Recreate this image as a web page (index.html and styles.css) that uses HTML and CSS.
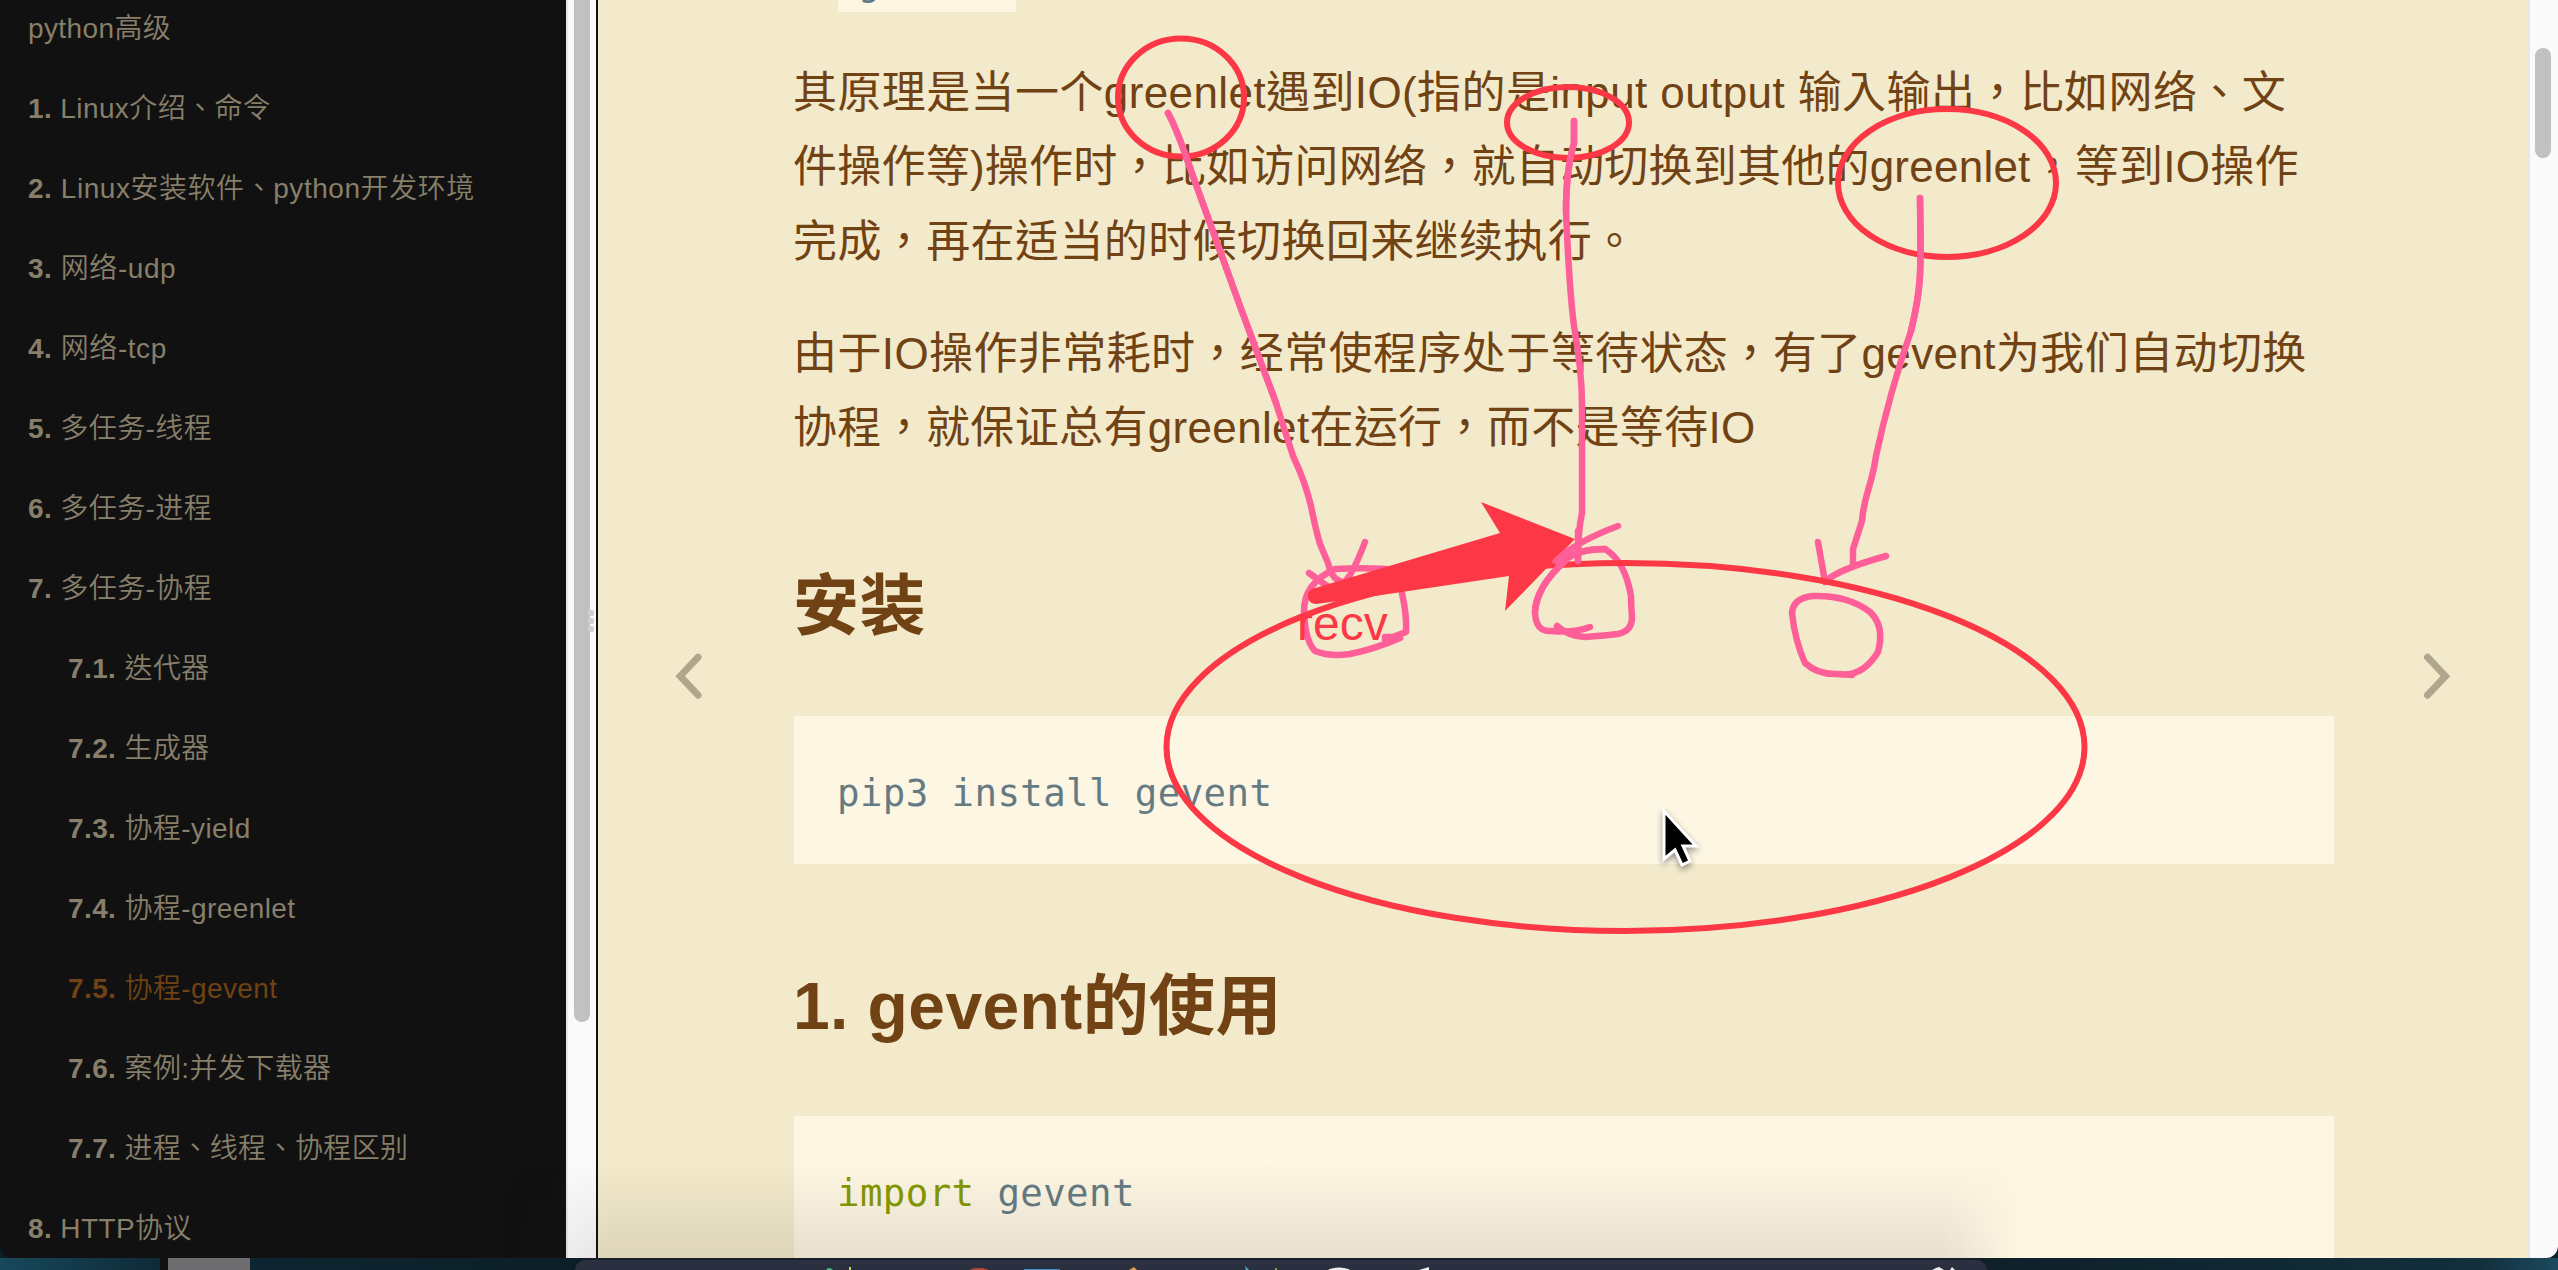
FILE: index.html
```html
<!DOCTYPE html>
<html lang="zh-TW">
<head>
<meta charset="utf-8">
<title>协程-gevent</title>
<link rel="stylesheet" href="styles.css">
</head>
<body>
<div class="window">
  <nav class="sidebar">
    <ul class="summary">
      <li>python高级</li>
      <li><b>1.</b> Linux介绍、命令</li>
      <li class="wide"><b>2.</b> Linux安装软件、python开发环境</li>
      <li class="wide"><b>3.</b> 网络-udp</li>
      <li class="wide"><b>4.</b> 网络-tcp</li>
      <li><b>5.</b> 多任务-线程</li>
      <li><b>6.</b> 多任务-进程</li>
      <li><b>7.</b> 多任务-协程</li>
      <li class="sub"><b>7.1.</b> 迭代器</li>
      <li class="sub"><b>7.2.</b> 生成器</li>
      <li class="sub"><b>7.3.</b> 协程-yield</li>
      <li class="sub"><b>7.4.</b> 协程-greenlet</li>
      <li class="sub active"><b>7.5.</b> 协程-gevent</li>
      <li class="sub"><b>7.6.</b> 案例:并发下载器</li>
      <li class="sub"><b>7.7.</b> 进程、线程、协程区别</li>
      <li><b>8.</b> HTTP协议</li>
    </ul>
  </nav>
  <div class="track side-track"><div class="thumb side-thumb"></div><div class="grip"><i></i><i></i><i></i></div></div>
  <main class="book">
    <svg class="nav" viewBox="0 0 28 46"><path d="M24.100 4.200L6.200 23.200L24.100 42.200"/></svg>
    <article class="page">
      <pre class="snippet">gevent</pre>
      <p>其原理是当一个greenlet遇到IO(指的是input output 输入输出，比如网络、文<br><span class="tight">件操作等)操作时，比如访问网络，就自动切换到其他的greenlet，等到IO操作</span><br>完成，再在适当的时候切换回来继续执行。</p>
      <p class="final">由于IO操作非常耗时，经常使程序处于等待状态，有了gevent为我们自动切换<br><span class="snug">协程，就保证总有greenlet在运行，而不是等待IO</span></p>
      <h2>安装</h2>
      <pre class="code">pip3 install gevent</pre>
      <h2 class="second">1. gevent的使用</h2>
      <pre class="code last"><span class="kw">import</span> gevent</pre>
    </article>
    <svg class="nav" viewBox="0 0 28 46"><path d="M5.500 4.200L23.400 23.200L5.500 42.200"/></svg>
  </main>
  <div class="track page-track"><div class="thumb page-thumb"></div></div>
</div>
<div class="desktop">
  <div class="device"></div>
  <div class="dock">
    <svg width="1412" height="10" viewBox="572 1260 1412 10">
      <path d="M823 1270q3-4 7 0z" fill="#4fb98a"/>
      <path d="M847 1267v3" stroke="#c8cf6a" stroke-width="2"/>
      <ellipse cx="976" cy="1273" rx="12" ry="5" fill="#b9463f"/>
      <path d="M1021 1269h36v1h-36z" fill="#3f8fd0"/>
      <path d="M1126 1270l5-3 3 3z" fill="#e09a50"/>
      <path d="M1242 1266l4 4h-3z" fill="#5bb6cf"/>
      <path d="M1273 1268v2" stroke="#8a9a4a" stroke-width="2"/>
      <ellipse cx="1336" cy="1273" rx="13" ry="5.500" fill="#eee"/>
      <path d="M1416 1270l10-3v3z" fill="#eee"/>
      <path d="M1929 1270l4-2 3-1 5 3zM1947 1270l2-3 3 3z" fill="#eee"/>
    </svg>
  </div>
</div>
<div class="dock-shade"></div>
<svg class="ink" viewBox="0 0 2558 1270">
  <g class="pink" transform="translate(0 1)">
    <path d="M1168 112C1178 130 1184 150 1194 178L1240 305L1276 402L1293 455Q1305 480 1311 505Q1316 530 1320 543L1328 562Q1332 578 1340 580"/>
    <path d="M1309 572L1327 585Q1340 590 1350 574Q1358 560 1365 541"/>
    <path d="M1400 569Q1370 566 1335 568Q1304 582 1304 610Q1305 640 1315 650Q1330 656 1350 653Q1375 648 1400 637M1402 592Q1407 615 1406 631L1385 639M1385 636L1400 636"/>
    <path d="M1574 120V142Q1566 170 1566 210Q1569 285 1574 325Q1582 370 1582 405V512Q1578 530 1578 560"/>
    <path d="M1565 560Q1537 585 1535 610Q1535 631 1551 630Q1575 632 1590 626M1557 625Q1568 635 1585 636Q1610 634 1618 633Q1632 630 1632 616Q1631 605 1631 595Q1625 560 1605 548Q1578 548 1564 560"/>
    <path d="M1920 197C1921 270 1922 285 1911 330Q1890 390 1876 455C1872 485 1864 493 1862 520L1853 548V562"/>
    <path d="M1818 541L1825 581Q1836 569 1886 555"/>
    <path d="M1813 595Q1793 597 1792 612Q1795 640 1805 662Q1818 674 1838 673Q1862 677 1878 651Q1885 625 1870 611Q1848 594 1813 595M1838 673L1852 674"/>
  </g>
  <g class="red">
    <ellipse cx="1181" cy="97.500" rx="63" ry="59"/>
    <ellipse cx="1568" cy="122.500" rx="61" ry="35.500"/>
    <ellipse cx="1947" cy="183" rx="109" ry="74"/>
    <ellipse cx="1625.500" cy="747" rx="459" ry="184"/>
  </g>
  <path class="pink" transform="translate(0 1)" d="M1168 112C1178 130 1184 150 1194 178L1240 305L1276 402M1574 120V142Q1566 170 1566 210M1920 197C1921 270 1922 285 1911 330"/>
  <path class="arrow" d="M1312 589L1500 533L1481 502L1575 539L1505 611L1509 576L1375 596L1316 604A8 8 0 0 1 1312 589Z"/>
  <path class="pink" transform="translate(0 1)" d="M1618 525Q1575 541 1556 560M1578 530V560M1565 560Q1537 585 1535 610M1564 560Q1578 548 1605 548"/>
  <path class="cursor" d="M1664 811V859L1675 850L1682 865L1690 861L1683 846H1696Z"/>
</svg>
<div class="note">recv</div>
</body>
</html>
```
FILE: styles.css
```css
* { box-sizing: border-box; }
body {
  margin: 0;
  width: 2558px;
  height: 1270px;
  overflow: hidden;
  position: relative;
  background: #0d2029;
  font-family: "Liberation Sans", "Noto Sans CJK TC", "Noto Sans CJK SC", sans-serif;
}
.window {
  display: flex;
  height: 1258px;
  border-radius: 0 0 12px 12px;
  overflow: hidden;
  background: #111;
}
.sidebar { width: 566px; flex: none; background: #111; overflow: hidden; }
.summary { list-style: none; margin: 0; padding: 0; margin-top: -11px; }
.summary li {
  height: 80px;
  padding-left: 28px;
  font: 350 28px/80px "Liberation Sans", "Noto Sans CJK TC", sans-serif;
  letter-spacing: .4px;
  color: #877f6a;
  white-space: nowrap;
}
.summary b { font-weight: 700; }
.summary li.wide { letter-spacing: .55px; }
.summary li.sub { padding-left: 68px; }
.summary li.active { color: #704214; }
.track { background: #fafafa; flex: none; position: relative; }
.side-track { width: 30px; border-left: 2px solid #e8e8e8; }
.thumb { background: #c1c1c1; border-radius: 8px; width: 16px; margin-left: 6px; }
.side-thumb { height: 1022px; border-radius: 0 0 8px 8px; }
.grip { position: absolute; left: 20px; top: 610px; display: grid; gap: 2px; }
.grip i { width: 6px; height: 6px; border-radius: 2px; background: #d0d0d0; }
.book {
  flex: 1;
  margin-left: 2px;
  background: #f3eacb;
  display: flex;
  align-items: flex-start;
  overflow: hidden;
}
.nav { width: 28px; height: 46px; flex: none; margin: 653px 0 0 76px; fill: none; stroke: #b0a68e; stroke-width: 7; stroke-linecap: round; }
.page { width: 1540px; flex: none; margin-left: 92px; color: #704214; }
.page + .nav { margin-left: 88px; }
.snippet, .code {
  margin: 0;
  background: #fdf6e3;
  color: #657b83;
  font-family: "DejaVu Sans Mono", monospace;
  font-size: 37.400px;
  letter-spacing: .4px;
}
.snippet { width: 178px; margin: -18px 0 0 44px; height: 30px; line-height: 0; padding: 0 20px; }
.page p {
  margin: 0 0 37.400px -1px;
  font-size: 44px;
  line-height: 74.400px;
  letter-spacing: .4px;
  white-space: nowrap;
}
.snippet + p { margin-top: 44px; }
.page p.final { margin-bottom: 0; }
.tight { letter-spacing: .24px; }
.snug { letter-spacing: .34px; }
.page h2 {
  margin: 0 0 0 -1px;
  font-size: 66px;
  line-height: 80px;
  letter-spacing: .4px;
  padding: 101px 0 70px;
}
.code { height: 148px; padding: 44px 43px; line-height: 66px; }
.page h2.second { padding: 102px 0 70px; }
.kw { color: #859900; }
.page-track { width: 30px; border-left: 2px solid #e8e8e8; }
.page-thumb { margin: 48px 0 0 5px; height: 110px; }
.desktop {
  height: 12px;
  display: flex;
  background: linear-gradient(90deg, #17485c, #0d2632 180px, #0c1f28 560px, #0f2029 2000px, #122f3c 2480px, #1b4a5f);
}
.device { width: 90px; margin-left: 160px; flex: none; border-left: 8px solid #111; background: #6d6d6f; }
.dock { margin-left: 325px; width: 1412px; flex: none; height: 12px; overflow: hidden; background: #2a3040; border-radius: 12px 12px 0 0; border-top: 2px solid #1a1f2c; }
.dock svg { display: block; }
.dock-shade {
  position: absolute;
  left: 500px;
  top: 1150px;
  width: 1520px;
  height: 108px;
  background: linear-gradient(transparent 10%, rgba(40, 35, 25, .1));
  -webkit-mask-image: linear-gradient(90deg, transparent, #000 110px, #000 1440px, transparent);
  mask-image: linear-gradient(90deg, transparent, #000 110px, #000 1440px, transparent);
}
.ink { position: absolute; left: 0; top: 0; width: 2558px; height: 1270px; }
.pink { fill: none; stroke: #ff5f98; stroke-width: 6.500; stroke-linecap: round; stroke-linejoin: round; }
.red { fill: none; stroke: #fd3846; stroke-width: 6; }
.arrow { fill: #fd3846; }
.cursor { fill: #000; stroke: #fff; stroke-width: 3; filter: drop-shadow(0 3px 3px rgba(0, 0, 0, .4)); }
.note { position: absolute; left: 1297px; top: 596px; font-size: 48px; line-height: 56px; color: #fd3846; }
```
